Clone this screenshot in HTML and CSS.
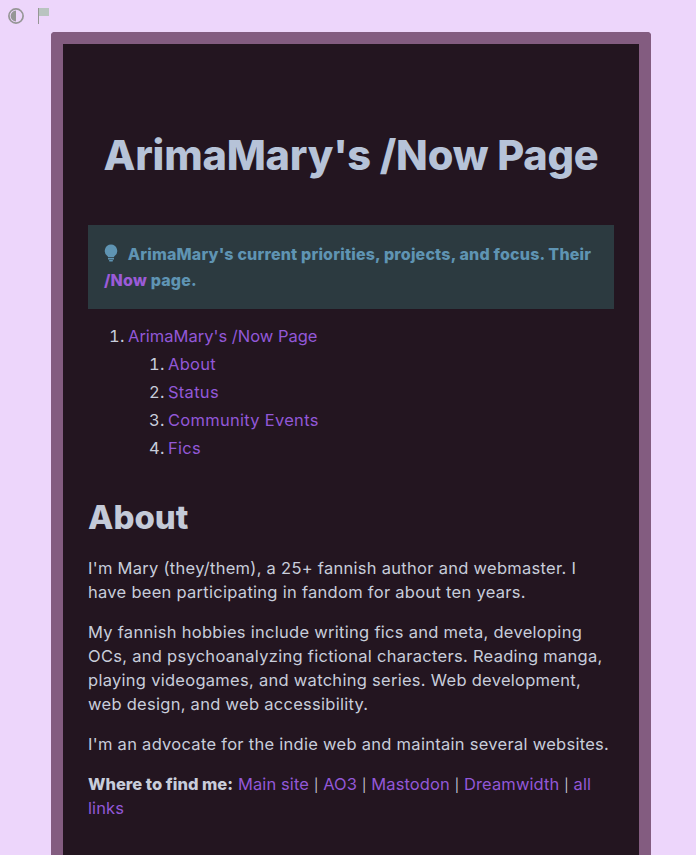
FILE: index.html
```html
<!DOCTYPE html>
<html lang="en">
<head>
    <meta charset="UTF-8">
    <meta name="viewport" content="width=device-width, initial-scale=1.0">
    <title>ArimaMary's /Now Page</title>
    <link rel="stylesheet" href="styles.css">
</head>
<body>
    <div class="page-tools">
        <button class="tool-btn" type="button" aria-label="Toggle contrast">
            <svg width="18" height="18" viewBox="0 0 18 18">
                <circle cx="8" cy="8" r="7.1" fill="none" stroke="#969696" stroke-width="1.7"/>
                <path d="M8 2.6a5.4 5.4 0 0 0 0 10.8z" fill="#969696"/>
            </svg>
        </button>
        <button class="tool-btn" type="button" aria-label="Flag">
            <svg width="14" height="18" viewBox="0 0 14 18">
                <rect x="0" y="0" width="1" height="16" fill="#969696"/>
                <rect x="1" y="0" width="10" height="8" fill="#b9c4c0"/>
            </svg>
        </button>
    </div>

    <main class="card">
        <h1>ArimaMary's /Now Page</h1>

        <p class="callout">
            <svg class="callout-icon" width="14" height="18" viewBox="0 0 14 18">
                <path d="M7 0.5a6.3 6.3 0 0 0-3.6 11.4c.5.4.7.9.7 1.4h5.8c0-.5.2-1 .7-1.4A6.3 6.3 0 0 0 7 .5z" fill="#5f94b3"/>
                <rect x="4" y="14" width="6" height="1.5" fill="#5f94b3"/>
                <rect x="5" y="16" width="4" height="1.5" rx=".7" fill="#5f94b3"/>
            </svg>
            <span>ArimaMary's current priorities, projects, and focus. Their</span> <a href="#">/Now</a> <span>page.</span>
        </p>

        <ol class="toc">
            <li><a class="toc-top" href="#">ArimaMary's /Now Page</a>
                <ol>
                    <li><a href="#">About</a></li>
                    <li><a href="#">Status</a></li>
                    <li><a href="#">Community Events</a></li>
                    <li><a href="#">Fics</a></li>
                </ol>
            </li>
        </ol>

        <h2>About</h2>
        <p>I'm Mary (they/them), a 25+ fannish author and webmaster. I have been participating in fandom for about ten years.</p>
        <p>My fannish hobbies include writing fics and meta, developing OCs, and psychoanalyzing fictional characters. Reading manga, playing videogames, and watching series. Web development, web design, and web accessibility.</p>
        <p>I'm an advocate for the indie web and maintain several websites.</p>
        <p class="find-me"><strong>Where to find me:</strong> <a href="#">Main site</a> <span class="sep">|</span> <a href="#">AO3</a> <span class="sep">|</span> <a href="#">Mastodon</a> <span class="sep">|</span> <a href="#">Dreamwidth</a> <span class="sep">|</span> <a href="#">all</a> <a href="#">links</a></p>
    </main>
</body>
</html>
```

FILE: styles.css
```css
html, body {
    margin: 0;
    padding: 0;
    height: 100%;
}
body {
    display: flex;
    flex-direction: column;
    overflow: hidden;
    background-color: #edd6fb;
    color: #c8cddb;
    font-family: Inter, sans-serif;
    font-size: 16.5px;
    line-height: 24px;
    letter-spacing: 0.28px;
}
a {
    color: #9258d8;
    text-decoration: none;
}
.page-tools {
    display: flex;
    flex: none;
    gap: 12px;
    height: 32px;
    padding: 8px 0 0 8px;
    box-sizing: border-box;
}
.tool-btn {
    background: none;
    border: none;
    padding: 0;
    height: 18px;
}
.card {
    flex: 1;
    min-height: 0;
    width: 526px;
    margin-left: 51px;
    padding: 25px 25px 0;
    border: 12px solid #835c80;
    border-bottom: none;
    border-radius: 4px 4px 0 0;
    background-color: #231520;
    background-clip: padding-box;
}
h1 {
    margin: 59px 0 43px;
    color: #b6c3d8;
    font-size: 41.5px;
    line-height: 54px;
    font-weight: 800;
    letter-spacing: -0.2px;
    text-align: center;
}
h2 {
    margin: 35px 0 19px;
    color: #c4cad8;
    font-size: 33px;
    line-height: 40px;
    font-weight: 800;
    letter-spacing: 0;
}
p {
    margin: 16px 0;
}
strong {
    font-weight: 800;
    letter-spacing: 0;
}
.callout {
    margin: 0;
    padding: 16px;
    background-color: #2c3a40;
    color: #5f94b3;
    font-weight: 800;
    font-size: 16px;
    line-height: 26px;
    letter-spacing: 0.19px;
}
.callout a {
    color: #9b5bd8;
}
.callout-icon {
    margin-right: 6px;
    vertical-align: -2px;
}
.toc {
    margin: 13px 0 16px;
    padding-left: 40px;
    line-height: 28px;
}
.toc ol {
    padding-left: 40px;
}
.toc li::marker {
    content: counter(list-item) ".\2009";
}
.toc-top {
    letter-spacing: 0;
}
.find-me a {
    letter-spacing: 0.1px;
}
.sep {
    font-size: 13px;
    line-height: 1;
    letter-spacing: 0;
}
```
